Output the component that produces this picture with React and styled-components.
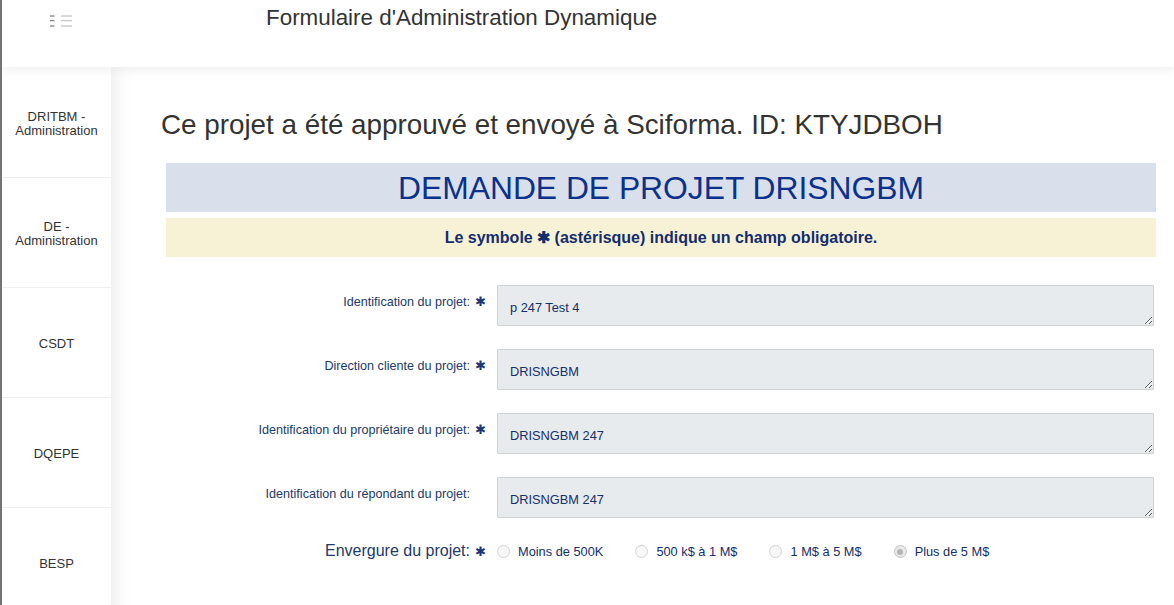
import React from "react";
import styled, { createGlobalStyle } from "styled-components";

const GlobalStyle = createGlobalStyle`
  html, body { margin: 0; padding: 0; background: #fff; }
  body {
    font-family: "Liberation Sans", Arial, sans-serif;
    border-left: 2px solid #747474;
    min-height: 605px;
    box-sizing: border-box;
    overflow: hidden;
  }
  * { box-sizing: border-box; }
`;

const Page = styled.div`
  display: flex;
  flex-direction: column;
  min-height: 605px;
`;

const Header = styled.header`
  position: relative;
  z-index: 3;
  height: 67px;
  display: flex;
  align-items: flex-start;
  padding: 4px 0 0 46px;
  background: #fff;
  box-shadow: 0 3px 10px rgba(0, 0, 0, 0.07);
`;

const MenuIcon = styled.svg`
  width: 26px;
  height: 16px;
  margin-top: 9px;
  flex: none;
`;

const AppTitle = styled.h1`
  margin: 0 0 0 192px;
  font-size: 22.4px;
  font-weight: 400;
  line-height: 28px;
  color: #333;
`;

const Body = styled.div`
  display: flex;
  flex: 1;
`;

const Sidebar = styled.nav`
  position: relative;
  z-index: 2;
  width: 109px;
  flex: none;
  background: #fff;
  box-shadow: 4px 0 18px rgba(0, 0, 0, 0.09);
  display: flex;
  flex-direction: column;
`;

const NavItem = styled.div`
  height: ${(p) => (p.$first ? 111 : 110)}px;
  display: flex;
  align-items: center;
  justify-content: center;
  text-align: center;
  font-size: 13px;
  line-height: 14px;
  color: #333;
  border-bottom: 1px solid #eeeeee;
  padding: ${(p) => (p.$first ? 4 : 2)}px 4px 0;
`;

const Main = styled.main`
  flex: 1;
  padding: 41px 18px 0 50px;
`;

const StatusHeading = styled.h2`
  margin: 0 0 22px;
  font-size: 27.8px;
  font-weight: 400;
  line-height: 33px;
  color: #333;
`;

const FormWrap = styled.section`
  margin-left: 5px;
`;

const Banner = styled.div`
  height: 49px;
  display: flex;
  align-items: center;
  justify-content: center;
  padding-top: 1px;
  background: #d9e0ec;
  color: #0b318c;
  font-size: 31.8px;
`;

const Notice = styled.div`
  margin-top: 6px;
  height: 39px;
  display: flex;
  align-items: center;
  justify-content: center;
  background: #f7f2d5;
  color: #142d6e;
  font-size: 16px;
  font-weight: 700;
`;

const Fields = styled.div`
  margin-top: 28px;
  padding-right: 2px;
`;

const Row = styled.div`
  display: grid;
  grid-template-columns: 331px 1fr;
  align-items: ${(p) => (p.$center ? "center" : "start")};
  margin-bottom: ${(p) => (p.$last ? 0 : 23)}px;
  margin-top: ${(p) => (p.$last ? 2 : 0)}px;
`;

const Label = styled.label`
  justify-self: end;
  padding-right: 11px;
  padding-top: ${(p) => (p.$big ? 0 : 9)}px;
  font-size: ${(p) => (p.$big ? 16 : 12.6)}px;
  line-height: ${(p) => (p.$big ? 20 : 15)}px;
  color: #213a69;
  white-space: nowrap;
`;

const Star = styled.span`
  display: inline-block;
  margin-left: 5px;
  font-size: 13px;
  color: #1d3674;
  visibility: ${(p) => (p.$hidden ? "hidden" : "visible")};
`;

const Field = styled.textarea`
  display: block;
  width: 100%;
  height: 41px;
  min-height: 41px;
  margin: 0;
  padding: 14px 12px 0;
  border: 1px solid #cfd2d6;
  border-radius: 1px;
  background: #e8ebee;
  color: #142f6b;
  font-family: "Liberation Sans", Arial, sans-serif;
  font-size: 12.8px;
  line-height: 15px;
  resize: vertical;
  outline: none;
`;

const Options = styled.div`
  display: flex;
  align-items: center;
`;

const Option = styled.span`
  display: flex;
  align-items: center;
  margin-right: 32px;
  font-size: 12.8px;
  color: #142f6b;
`;

const RadioDot = styled.span`
  position: relative;
  width: 13px;
  height: 13px;
  margin-right: 8px;
  border-radius: 50%;
  border: 1px solid ${(p) => (p.$checked ? "#c4c4c4" : "#d4d4d4")};
  background: ${(p) => (p.$checked ? "#e9e9e9" : "#f7f7f7")};
  flex: none;
  &::after {
    content: "";
    display: ${(p) => (p.$checked ? "block" : "none")};
    position: absolute;
    left: 2.5px;
    top: 2.5px;
    width: 6px;
    height: 6px;
    border-radius: 50%;
    background: #b5b5b5;
  }
`;

const navItems = [
  ["DRITBM -", "Administration"],
  ["DE -", "Administration"],
  ["CSDT"],
  ["DQEPE"],
  ["BESP"],
];

const fields = [
  { label: "Identification du projet:", value: "p 247 Test 4", req: true },
  { label: "Direction cliente du projet:", value: "DRISNGBM", req: true },
  { label: "Identification du propriétaire du projet:", value: "DRISNGBM 247", req: true },
  { label: "Identification du répondant du projet:", value: "DRISNGBM 247", req: false },
];

const options = [
  { label: "Moins de 500K" },
  { label: "500 k$ à 1 M$" },
  { label: "1 M$ à 5 M$" },
  { label: "Plus de 5 M$", checked: true },
];

export default function App() {
  return (
    <Page>
      <GlobalStyle />
      <Header>
        <MenuIcon viewBox="0 0 26 16">
          <g strokeWidth="1.4">
            <line x1="2" y1="3" x2="6.5" y2="3" stroke="#8a8a8a" />
            <line x1="2" y1="7.6" x2="6.5" y2="7.6" stroke="#8a8a8a" />
            <line x1="2" y1="13" x2="6.5" y2="13" stroke="#8a8a8a" />
            <line x1="13" y1="3" x2="24" y2="3" stroke="#c9c9c9" />
            <line x1="13" y1="7.6" x2="24" y2="7.6" stroke="#c9c9c9" />
            <line x1="13" y1="13" x2="24" y2="13" stroke="#c9c9c9" />
          </g>
        </MenuIcon>
        <AppTitle>Formulaire d'Administration Dynamique</AppTitle>
      </Header>
      <Body>
        <Sidebar>
          {navItems.map((lines, i) => (
            <NavItem key={i} $first={i === 0}>
              <span>
                {lines.map((l, j) => (
                  <React.Fragment key={j}>
                    {j > 0 && <br />}
                    {l}
                  </React.Fragment>
                ))}
              </span>
            </NavItem>
          ))}
        </Sidebar>
        <Main>
          <StatusHeading>
            Ce projet a été approuvé et envoyé à Sciforma. ID: KTYJDBOH
          </StatusHeading>
          <FormWrap>
            <Banner>DEMANDE DE PROJET DRISNGBM</Banner>
            <Notice>Le symbole ✱ (astérisque) indique un champ obligatoire.</Notice>
            <Fields>
              {fields.map((f, i) => (
                <Row key={i}>
                  <Label>
                    {f.label}
                    <Star $hidden={!f.req}>✱</Star>
                  </Label>
                  <Field readOnly value={f.value} />
                </Row>
              ))}
              <Row $center $last>
                <Label $big>
                  Envergure du projet:
                  <Star>✱</Star>
                </Label>
                <Options>
                  {options.map((o, i) => (
                    <Option key={i}>
                      <RadioDot $checked={o.checked} />
                      {o.label}
                    </Option>
                  ))}
                </Options>
              </Row>
            </Fields>
          </FormWrap>
        </Main>
      </Body>
    </Page>
  );
}
